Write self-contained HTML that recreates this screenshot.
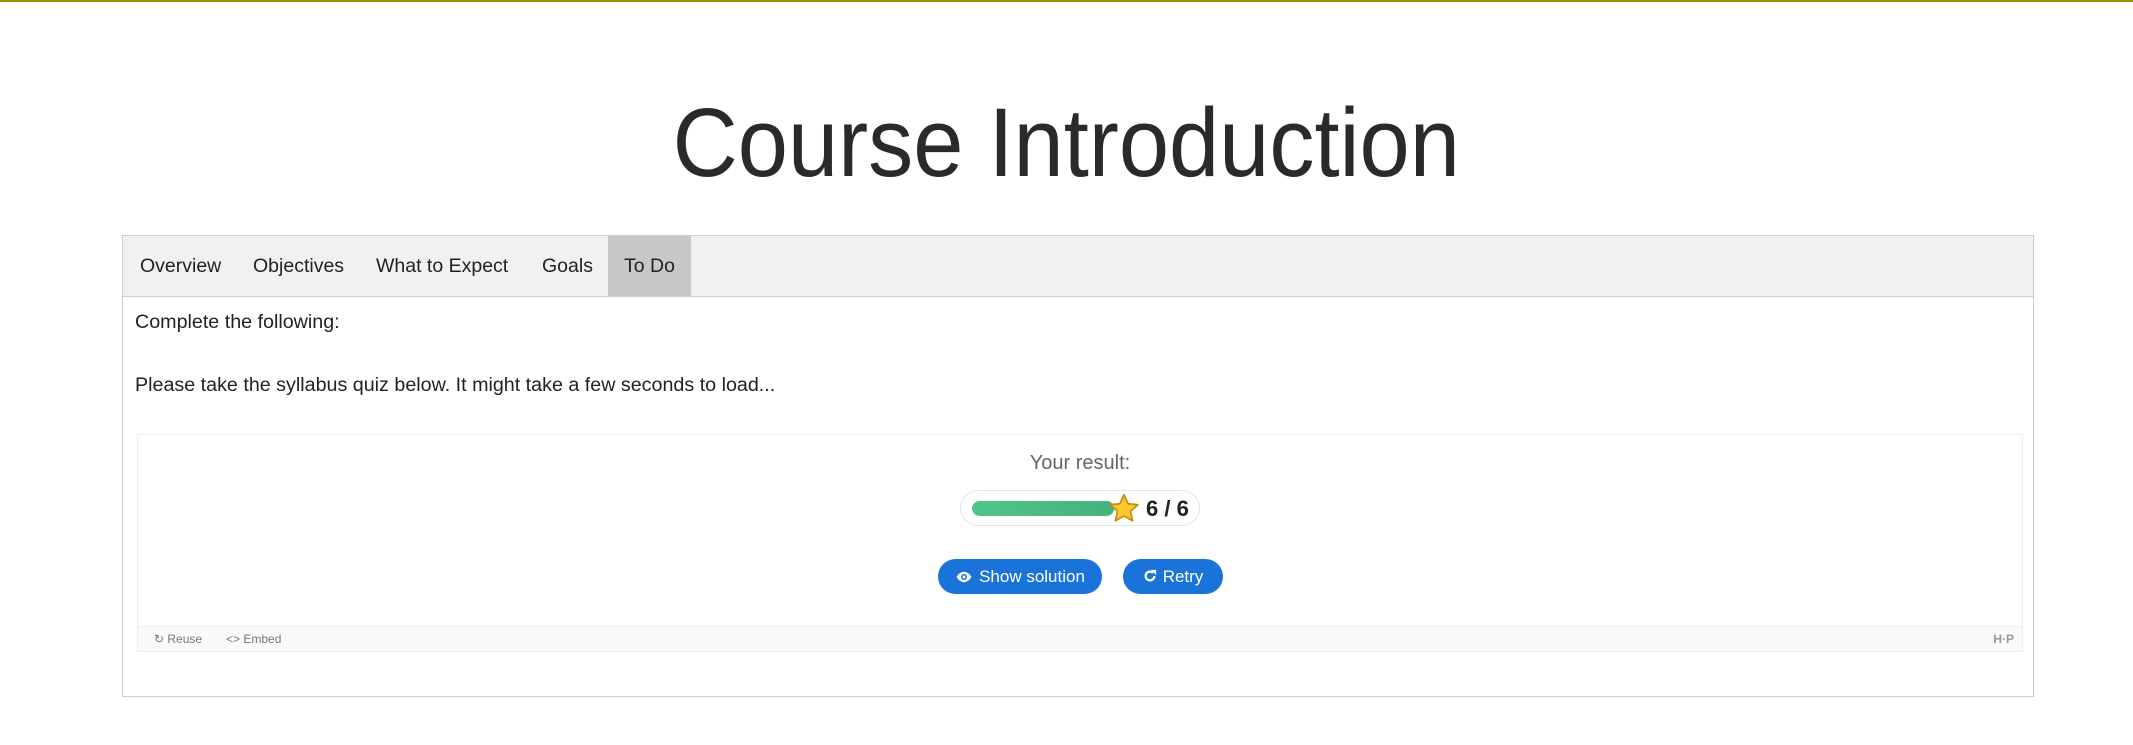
<!DOCTYPE html>
<html><head><meta charset="utf-8"><style>
*{box-sizing:border-box;margin:0;padding:0}
body{width:2133px;height:745px;background:#fff;font-family:"Liberation Sans",sans-serif;position:relative;overflow:hidden;border-top:2px solid #9a8f00}
.title{position:absolute;top:86px;left:0;width:2133px;text-align:center;font-size:97px;font-weight:300;color:#2a2a2a;line-height:110px}
.title span{display:inline-block;transform:scaleX(0.93)}
.box{position:absolute;left:122px;top:233px;width:1912px;height:462px;border:1px solid #ccc}
.tabs{height:61px;background:#f1f1f1;border-bottom:1px solid #ccc;position:relative}
.tab{position:absolute;top:0;height:60px;line-height:60px;font-size:19.5px;color:#222;white-space:nowrap}
.tab.active{background:#c8c8c8;text-align:center}
.p{position:absolute;left:12px;font-size:19.7px;color:#222}
.h5p{position:absolute;left:14px;top:198px;width:1886px;height:218px;border:1px solid #eee}
.res{position:absolute;top:17px;width:100%;text-align:center;font-size:20px;color:#666}
.pill{position:absolute;left:822px;top:55px;width:240px;height:36px;border:1px solid #e4e4e4;border-radius:18px}
.bar{position:absolute;left:11px;top:10px;width:142px;height:15px;border-radius:8px;background:linear-gradient(90deg,#51c68b,#44b27c)}
.score{position:absolute;left:185px;top:5px;font-size:22px;font-weight:bold;color:#222}
.btn{position:absolute;top:124px;height:35px;border-radius:18px;background:#1a73d9;color:#fff;font-size:17px;line-height:35px;text-align:center}
.foot{position:absolute;left:0;bottom:0;width:100%;height:25px;background:#fafafa;border-top:1px solid #eee;font-size:12px;color:#777;line-height:24px}
</style></head><body>
<div class="title"><span>Course Introduction</span></div>
<div class="box">
 <div class="tabs">
  <div class="tab" style="left:17px">Overview</div>
  <div class="tab" style="left:130px">Objectives</div>
  <div class="tab" style="left:253px">What to Expect</div>
  <div class="tab" style="left:419px">Goals</div>
  <div class="tab active" style="left:485px;width:83px">To Do</div>
 </div>
 <div class="p" style="top:75px">Complete the following:</div>
 <div class="p" style="top:138px">Please take the syllabus quiz below. It might take a few seconds to load...</div>
 <div class="h5p">
  <div class="res">Your result:</div>
  <div class="pill"><div class="bar"></div>
   <svg style="position:absolute;left:146px;top:1px" width="34" height="34" viewBox="0 0 24 24"><path d="M12 2l2.9 6.3 6.9.7-5.2 4.6 1.5 6.8L12 16.9 5.9 20.4l1.5-6.8L2.2 9l6.9-.7z" fill="#fcc72c" stroke="#c88a10" stroke-width="1.2" stroke-linejoin="round"/></svg>
   <div class="score">6 / 6</div></div>
  <div class="btn" style="left:800px;width:164px"><svg width="18" height="12" viewBox="0 0 24 16" style="vertical-align:-1px;margin-right:6px"><path d="M12 1C6 1 2 8 2 8s4 7 10 7 10-7 10-7-4-7-10-7z" fill="#fff"/><circle cx="12" cy="8" r="4" fill="#1a73d9"/><circle cx="12" cy="8" r="2" fill="#fff"/></svg>Show solution</div>
  <div class="btn" style="left:985px;width:100px"><svg width="14" height="14" viewBox="0 0 16 16" style="vertical-align:-1px;margin-right:6px"><path d="M13 8a5 5 0 1 1-1.5-3.6" fill="none" stroke="#fff" stroke-width="2.6"/><path d="M9 1h6v6z" fill="#fff"/></svg>Retry</div>
  <div class="foot"><span style="position:absolute;left:16px">↻ Reuse</span><span style="position:absolute;left:88px">&lt;&gt; Embed</span><span style="position:absolute;right:8px;font-weight:bold;color:#999">H·P</span></div>
 </div>
</div>
</body></html>
